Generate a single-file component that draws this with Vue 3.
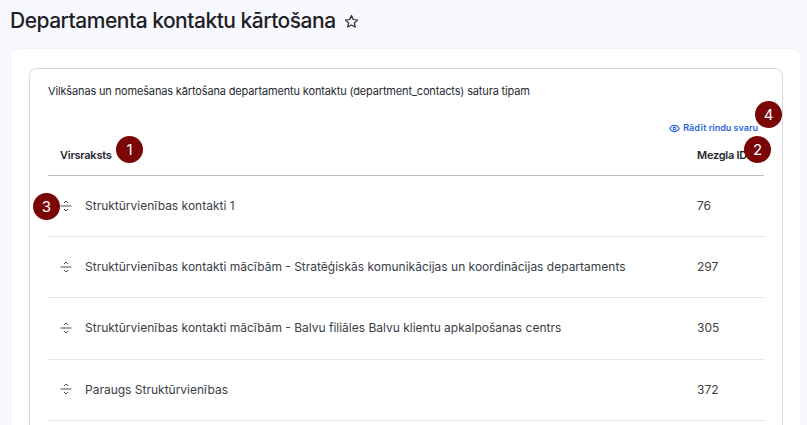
<script setup>
const rows = [
  { title: 'Struktūrvienības kontakti 1', id: 76, badge: true },
  { title: 'Struktūrvienības kontakti mācībām - Stratēģiskās komunikācijas un koordinācijas departaments', id: 297 },
  { title: 'Struktūrvienības kontakti mācībām - Balvu filiāles Balvu klientu apkalpošanas centrs', id: 305 },
  { title: 'Paraugs Struktūrvienības', id: 372 }
]
</script>

<template>
  <div class="page">
    <header class="head">
      <h1>Departamenta kontaktu kārtošana</h1>
      <svg class="star" viewBox="0 0 24 24" width="15" height="15" fill="none" stroke="currentColor" stroke-width="2" stroke-linejoin="round">
        <path d="M12 2.6l2.9 6.2 6.7.8-5 4.6 1.4 6.7-6-3.4-6 3.4 1.4-6.7-5-4.6 6.7-.8z" />
      </svg>
    </header>
    <main class="outer">
      <section class="inner">
        <p class="desc">Vilkšanas un nomešanas kārtošana departamentu kontaktu (department_contacts) satura tipam</p>
        <div class="weights">
          <a class="link">
            <svg viewBox="0 0 24 24" width="11" height="11" fill="none" stroke="currentColor" stroke-width="2.2">
              <path d="M1.5 12S5.5 5 12 5s10.5 7 10.5 7-4 7-10.5 7S1.5 12 1.5 12z" />
              <circle cx="12" cy="12" r="3" />
            </svg>
            Rādīt rindu svaru
          </a>
          <span class="badge b4">4</span>
        </div>
        <div class="table">
          <div class="row th">
            <span class="cell-title">Virsraksts<span class="badge b1">1</span></span>
            <span class="cell-id">Mezgla ID<span class="badge b2">2</span></span>
          </div>
          <div v-for="r in rows" :key="r.id" class="row td">
            <span class="handle">
              <span v-if="r.badge" class="badge b3">3</span>
              <svg viewBox="0 0 12 12" width="12" height="12" fill="none" stroke="#4a505b" stroke-width="1">
                <path d="M4 3 6 1l2 2M.5 6h11M4 9l2 2 2-2" />
              </svg>
            </span>
            <span class="cell-title text">{{ r.title }}</span>
            <span class="cell-id text">{{ r.id }}</span>
          </div>
        </div>
      </section>
    </main>
  </div>
</template>

<style>
html, body { margin: 0; height: 100%; overflow: hidden; background: #f8f9fe; }
</style>

<style scoped>
.page {
  height: 425px;
  overflow: hidden;
  box-sizing: border-box;
  padding: 5px 5px 0 10px;
  font-family: Inter, "Liberation Sans", sans-serif;
  color: #232730;
}
.head { display: flex; align-items: center; gap: 8px; height: 32px; margin-bottom: 11px; }
h1 { margin: 0; font-size: 21px; font-weight: 500; letter-spacing: -0.5px; line-height: 32px; color: #1e2026; }
.star { color: #2a2d34; }
.outer {
  background: #fff;
  border: 1px solid #f0f1f5;
  border-radius: 10px;
  padding: 19px 18px 0;
  height: 500px;
}
.inner {
  border: 1px solid #d6d8dc;
  border-radius: 8px;
  padding: 15px 18px 0;
  height: 480px;
  background: #fff;
}
.desc { margin: 0; font-size: 11px; letter-spacing: -0.15px; line-height: 15px; color: #262a31; }
.weights { position: relative; display: flex; justify-content: flex-end; margin-top: 22px; padding-right: 6px; height: 14px; }
.link { display: inline-flex; align-items: center; gap: 3px; font-size: 9px; font-weight: 600; color: #2a66dd; line-height: 14px; }
.table { margin-top: 3px; }
.row { display: flex; align-items: center; border-bottom: 1px solid #e4e5e8; }
.th { height: 38px; border-bottom-color: #bcbec2; padding: 0 0 3px 12px; font-size: 11px; font-weight: 600; letter-spacing: -0.25px; color: #24272e; box-sizing: border-box; }
.td { height: 61.2px; box-sizing: border-box; padding: 0 0 1px 12px; }
.th .cell-title { position: relative; flex: 1; }
.td .cell-title { flex: 1; }
.cell-id { position: relative; width: 67px; flex: none; }
.handle { position: relative; display: flex; width: 25px; flex: none; }
.text { font-size: 12px; letter-spacing: 0; color: #3a3e47; }
.badge {
  position: absolute;
  width: 27px;
  height: 27px;
  border-radius: 50%;
  background: #7a0606;
  color: #fff;
  font-size: 15px;
  font-weight: 400;
  letter-spacing: 0;
  display: flex;
  align-items: center;
  justify-content: center;
}
.b1 { left: 56px; top: -12px; }
.b2 { left: 47px; top: -12px; }
.b3 { left: -27px; top: -7px; }
.b4 { right: -18px; top: -20px; }
</style>
